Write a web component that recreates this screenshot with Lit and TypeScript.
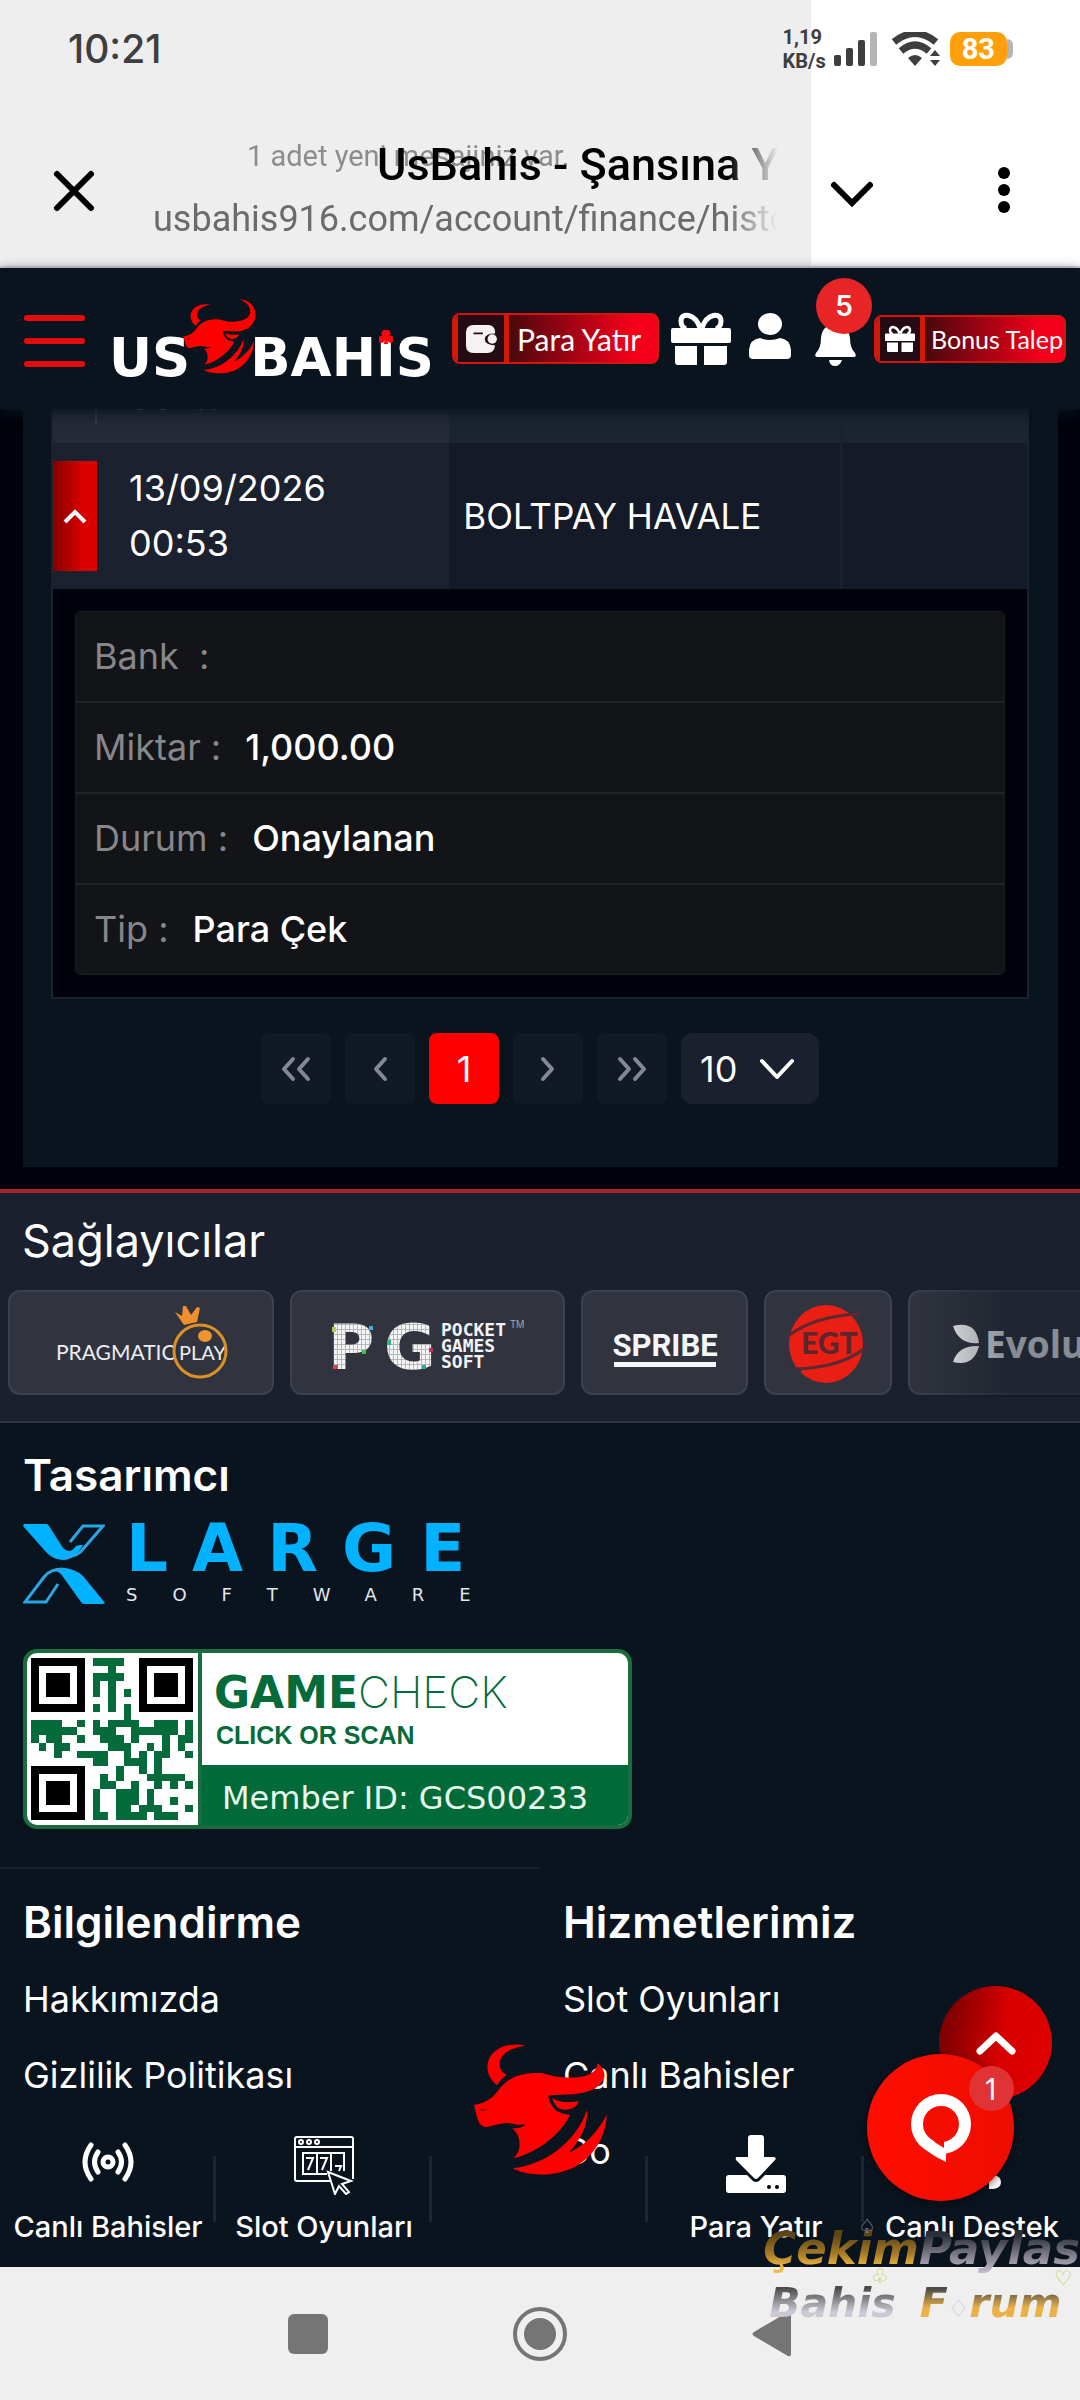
import { LitElement, html, css, svg, nothing } from "lit";
import { customElement, property } from "lit/decorators.js";

const DETAILS: [string, string][] = [
  ["Bank  :", ""],
  ["Miktar :", "1,000.00"],
  ["Durum :", "Onaylanan"],
  ["Tip :", "Para Çek"],
];

/* Each entry is [row, first column, last column] of dark modules. */
const QR_RUNS: number[][] = [
  [0, 8, 11], [1, 10, 10], [2, 8, 11], [3, 8, 8], [3, 10, 10],
  [4, 8, 8], [4, 10, 10], [4, 12, 12], [5, 10, 10], [6, 8, 8], [6, 10, 10], [6, 12, 12], [7, 12, 12],
  [8, 0, 3], [8, 6, 6], [8, 8, 8], [8, 10, 13], [8, 16, 18], [8, 20, 20],
  [9, 0, 5], [9, 8, 10], [9, 13, 18], [9, 20, 20],
  [10, 0, 0], [10, 2, 3], [10, 6, 6], [10, 9, 11], [10, 13, 13], [10, 17, 17], [10, 19, 20],
  [11, 1, 1], [11, 3, 4], [11, 10, 12], [11, 15, 15], [11, 17, 17], [11, 19, 19],
  [12, 3, 3], [12, 6, 9], [12, 12, 12], [12, 14, 14], [12, 16, 17], [12, 20, 20],
  [13, 8, 9], [13, 12, 14], [13, 16, 16],
  [14, 11, 11], [14, 14, 14], [14, 16, 16],
  [15, 9, 9], [15, 11, 11], [15, 15, 19],
  [16, 9, 10], [16, 13, 13], [16, 16, 16], [16, 18, 18], [16, 20, 20],
  [17, 8, 8], [17, 11, 13], [17, 15, 15],
  [18, 8, 8], [18, 11, 13], [18, 15, 15], [18, 18, 18],
  [19, 8, 8], [19, 11, 12], [19, 14, 16], [19, 20, 20],
  [20, 8, 9], [20, 11, 14], [20, 16, 18],
];

const finder = (x: number, y: number) => svg`
  <rect x=${x} y=${y} width="7" height="7" fill="#000"/>
  <rect x=${x + 1} y=${y + 1} width="5" height="5" fill="#fff"/>
  <rect x=${x + 2} y=${y + 2} width="3" height="3" fill="#000"/>`;

const giftIcon = (cls: string) => html`<svg class=${cls} viewBox="0 0 60 52" aria-hidden="true">
  <path d="M29 15C24 0 10-1 10 8q0 6 5 8M31 15C36 0 50-1 50 8q0 6-5 8" fill="none" stroke="#fff" stroke-width="5"/>
  <path d="M2 15h56q2 0 2 2v11q0 2-2 2H2q-2 0-2-2V17q0-2 2-2z" fill="#fff"/>
  <path d="M4 33h22v19H7q-3 0-3-3zM33 33h23v16q0 3-3 3H33z" fill="#fff"/>
</svg>`;

@customElement("bull-mark")
class BullMark extends LitElement {
  @property({ type: Boolean }) cropped = false;
  static styles = css`
    :host { display: block; }
    .mark { display: block; width: 100%; height: 100%; overflow: visible; }
  `;
  render() {
    const horn = this.cropped
      ? "C350 148 385 142 400 128C408 120 412 112 412 102C426 114 438 130 432 148C420 180 380 192 340 196"
      : "C362 148 412 132 419 95C424 58 392 28 353 17C412 18 452 62 449 110C445 165 400 200 340 200";
    return html`<svg class="mark" viewBox="0 0 480 480" aria-hidden="true">
      <g fill="#fe0000">
        <path d="M196 50C150 38 100 55 85 95C75 130 95 158 112 168C118 155 130 145 140 138C116 125 112 100 128 80C143 62 170 54 196 50Z"/>
        <path d="M42 228C80 222 100 205 118 180C150 140 190 130 245 132C270 138 280 143 312 145${horn}L284 198L265 200C268 235 295 256 330 257C310 300 270 338 222 364C200 376 180 384 160 388C182 368 180 345 177 330C173 314 165 305 156 297C175 299 188 296 196 286C172 290 160 284 145 282C120 282 100 290 80 294C66 296 56 282 51 264Z"/>
        <path d="M277 206C292 220 330 222 356 216C350 240 320 246 302 240C288 234 280 220 277 206Z"/>
        <path d="M158 418C250 408 345 345 381 243C385 290 360 335 326 372C380 348 420 300 440 256C440 320 400 385 345 413C285 445 200 442 158 418Z"/>
      </g>
      <path d="M60 240q8-2 20 0q-5 7-14 7z" fill="#6d0308"/>
    </svg>`;
  }
}

@customElement("qr-code")
class QrCode extends LitElement {
  static styles = css`
    :host { display: block; }
    .code { display: block; width: 100%; height: 100%; }
  `;
  render() {
    return html`<svg class="code" viewBox="0 0 21 21" shape-rendering="crispEdges" role="img" aria-label="QR">
      ${QR_RUNS.map(([r, a, b]) => svg`<rect x=${a} y=${r} width=${b - a + 1} height="1" fill="#056b3a"/>`)}
      ${finder(0, 0)}${finder(14, 0)}${finder(0, 14)}
    </svg>`;
  }
}

@customElement("phone-chrome")
class PhoneChrome extends LitElement {
  static styles = css`
    :host {
      display: block; color: #3e3e3e; border-bottom: 2px solid #d9dae0;
      background: linear-gradient(90deg, #eee 75.1%, #fff 75.1%);
      font-family: Roboto, sans-serif;
    }
    .status { display: flex; align-items: center; padding: 20px 71px 0 68px; height: 78px; box-sizing: border-box; gap: 14px; }
    .clock { font: 500 39px/48px Inter, sans-serif; margin-right: auto; }
    .speed { font-size: 20px; line-height: 24px; font-weight: 700; }
    .signal { width: 44px; height: 34px; margin-left: -6px; }
    .wifi { width: 48px; height: 34px; }
    .battery { display: flex; align-items: center; margin: 0 -4px; }
    .level { background: #ff9f0c; color: #fff; border-radius: 10px; padding: 0 12px; font-size: 29px; font-weight: 700; line-height: 34px; }
    .tip { width: 6px; height: 20px; background: #b5b5b5; border-radius: 0 8px 8px 0; }
    .bar { display: flex; align-items: center; padding: 60px 46px 20px 44px; }
    .tool { border: 0; padding: 0; background: none; width: 60px; height: 60px; display: grid; place-items: center; flex: none; }
    .tool svg { width: 60px; height: 60px; }
    .menu { margin-left: 92px; }
    .text { flex: 1; margin: 0 44px 0 49px; min-width: 0; mask-image: linear-gradient(90deg, #000 92%, transparent 100%); }
    .lines { display: grid; }
    .notice, .title { grid-area: 1 / 1; white-space: nowrap; }
    .notice { color: #8d8d8d; font-size: 29px; line-height: 36px; padding-left: 94px; }
    .title { color: #000; font-size: 45px; line-height: 54px; font-weight: 500; padding-left: 224px; overflow: hidden; }
    .url { color: #6b6b6b; font-size: 36px; line-height: 54px; font-weight: 400; white-space: nowrap; overflow: hidden; }
  `;
  render() {
    return html`
      <div class="status">
        <span class="clock">10:21</span>
        <span class="speed">1,19<br>KB/s</span>
        <svg class="signal" viewBox="0 0 44 34" aria-hidden="true">
          <g fill="#3e3e3e"><rect y="23" width="7" height="11" rx="2"/><rect x="12" y="16" width="7" height="18" rx="2"/><rect x="24" y="8" width="7" height="26" rx="2"/></g>
          <rect x="36" width="7" height="34" rx="2" fill="#b5b5b5"/>
        </svg>
        <svg class="wifi" viewBox="0 0 48 34" aria-hidden="true">
          <path d="M2 10Q23-7 44 10M9 19Q23 7 37 19" fill="none" stroke="#3e3e3e" stroke-width="7"/>
          <path d="M16 26q7-6 14 0l-7 8z" fill="#3e3e3e"/>
          <path d="M38 24l5-6 5 6zM38 28h10l-5 6z" fill="#3e3e3e"/>
        </svg>
        <span class="battery"><span class="level">83</span><span class="tip"></span></span>
      </div>
      <div class="bar">
        <button class="tool" aria-label="Kapat"><svg viewBox="0 0 60 60"><path d="M13 12l34 34M47 12L13 46" stroke="#000" stroke-width="6" stroke-linecap="round"/></svg></button>
        <div class="text">
          <div class="lines"><span class="notice">1 adet yeni mesajiniz var.</span><span class="title">UsBahis - Şansına Y</span></div>
          <div class="url">usbahis916.com/account/finance/histo</div>
        </div>
        <button class="tool" aria-label="Aç"><svg viewBox="0 0 60 60"><path d="M12 23l18 18 18-18" fill="none" stroke="#000" stroke-width="6" stroke-linecap="round"/></svg></button>
        <button class="tool menu" aria-label="Menü"><svg viewBox="0 0 60 60"><circle cx="30" cy="11" r="6"/><circle cx="30" cy="28" r="6"/><circle cx="30" cy="45" r="6"/></svg></button>
      </div>`;
  }
}

@customElement("site-header")
class SiteHeader extends LitElement {
  static styles = css`
    :host {
      display: flex; align-items: center; position: relative; z-index: 2; height: 141px; padding: 0 14px 0 24px; box-sizing: border-box;
      background: #0a141f; box-shadow: 0 4px 12px #0a141f; font-family: Inter, sans-serif;
    }
    button { border: 0; background: none; padding: 0; font: inherit; color: #fff; }
    .burger { display: flex; flex-direction: column; gap: 17px; width: 61px; flex: none; margin-top: 4px; }
    .burger i { height: 6px; border-radius: 3px; background: #e30d0f; }
    .logo { display: flex; align-items: flex-end; margin-left: 24px; color: #fff; text-decoration: none; font: 700 53px/48px "DejaVu Sans", sans-serif; }
    .bull { width: 85px; height: 85px; margin: 0 -11px 0 -14px; z-index: 1; }
    .dotted { position: relative; }
    .club { position: absolute; left: 50%; bottom: 44px; width: 14px; height: 14px; transform: translateX(-50%); }
    .word { margin-bottom: -1px; }
    .actions { display: flex; align-items: center; gap: 12px; margin-left: auto; }
    .icon { padding: 0 6px; position: relative; display: block; }
    .gift { width: 60px; height: 52px; display: block; overflow: visible; }
    .user { width: 42px; height: 46px; display: block; margin-bottom: 6px; }
    .bell { width: 41px; height: 42px; display: block; margin-top: 12px; }
    .plain { padding: 0; }
    .count { position: absolute; left: 7px; top: -34px; width: 56px; height: 56px; line-height: 56px; border-radius: 50%; background: #e82526; font-size: 28px; font-weight: 600; text-align: center; }
    .cta {
      display: flex; align-items: center; box-sizing: border-box; height: 51px; border: 2px solid #d81410; border-radius: 8px; white-space: nowrap;
      background: linear-gradient(90deg, #4d080d 28%, #f5001a 88%); font-family: Lato, sans-serif; font-size: 25px; overflow: hidden;
    }
    .box { width: 46px; align-self: stretch; border: 0 solid #d11a06; border-width: 0 5px 0 4px; border-radius: 4px 0 0 4px; display: grid; place-items: center; background: #250c14; flex: none; }
    .pay { width: 207px; gap: 8px; font-size: 30px; }
    .bonus { width: 192px; gap: 6px; height: 48px; }
    .bonus .box { width: 40px; }
    .mini { width: 30px; height: 32px; display: block; overflow: visible; }
  `;
  render() {
    return html`
      <button class="burger" aria-label="Menü"><i></i><i></i><i></i></button>
      <a class="logo" href="#"><span class="word">US</span><bull-mark class="bull"></bull-mark><span class="word">BAH<span class="dotted">I<svg class="club" viewBox="0 0 12 12"><path d="M6 0a3 3 0 0 1 3 5A3 3 0 1 1 7 9l1 3H4l1-3A3 3 0 1 1 3 5A3 3 0 0 1 6 0" fill="#f30a0e"/></svg></span>S</span></a>
      <div class="actions">
        <button class="cta pay"><span class="box"><svg class="mini" viewBox="0 0 32 30"><path d="M8 0h16q6 0 7 7v2q-11 0-11 6t11 7q-1 8-8 8H8q-8 0-8-8V8q0-8 8-8z" fill="#f6f2f2"/><path d="M8 9h10" stroke="#250c14" stroke-width="2"/><circle cx="28" cy="15" r="5" fill="#f6f2f2"/></svg></span>Para Yatır</button>
        <button class="icon plain" aria-label="Hediye">${giftIcon("gift")}</button>
        <button class="icon" aria-label="Hesap"><svg class="user" viewBox="0 0 42 46"><ellipse cx="21" cy="11" rx="12" ry="11" fill="#fff"/><path d="M11 25q10 4 20 0q10 1 11 12v5q0 4-4 4H4q-4 0-4-4v-5q1-11 11-12z" fill="#fff"/></svg></button>
        <button class="icon" aria-label="Bildirimler"><svg class="bell" viewBox="0 0 41 42"><path d="M20 0q13 1 15 14q0 10 5 15q2 4-1 4H2q-3 0-1-4q5-5 5-15Q7 1 20 0zM14 36h13q-2 6-7 6t-6-6z" fill="#fff"/></svg><span class="count">5</span></button>
        <button class="cta bonus"><span class="box">${giftIcon("mini")}</span>Bonus Talep</button>
      </div>`;
  }
}

@customElement("history-panel")
class HistoryPanel extends LitElement {
  static styles = css`
    :host { display: block; margin-top: -114px; background: #00030b; padding: 0 22px 22px 23px; font-family: Inter, sans-serif; color: #fff; font-size: 36px; }
    .panel { background: #0a141f; padding: 0 29px 63px 28px; }
    table { width: 100%; border-collapse: collapse; table-layout: fixed; border: 2px solid #1b222d; }
    td { padding: 0; height: 146px; background: #141a27; vertical-align: middle; }
    td + td { padding-left: 14px; }
    td:last-child { border-left: 2px solid #1b222e; }
    .date { width: 40.6%; background: #1b212e; line-height: 55px; }
    .method { width: 38.6%; font-size: 35px; }
    .old td { background: #1d2431; }
    .old .date { background: #242a36; color: #7e838b; }
    .flex { display: flex; align-items: center; gap: 32px; }
    .toggle { width: 44px; height: 110px; border: 0; padding: 0; background: linear-gradient(90deg, #870000, #db0000 70%); display: grid; place-items: center; flex: none; }
    .old .toggle { background: none; border-right: 2px solid #373d48; }
    .arrow { width: 26px; height: 18px; }
    .detail td { height: auto; background: #00030b; padding: 22px; border: 0; }
    dl { margin: 0; border-radius: 6px; background: #131417; border: 1px solid #1b1c20; }
    .item { display: flex; gap: 24px; padding: 0 18px; line-height: 89px; border-top: 2px solid #222427; }
    .item:first-child { border-top: 0; }
    dt { color: #86878a; white-space: pre; }
    dd { margin: 0; font-weight: 500; }
    .pager { display: flex; justify-content: center; gap: 14px; margin-top: 34px; }
    .page { width: 70px; height: 71px; border: 0; border-radius: 8px; background: #111926; color: #fff; font: inherit; display: grid; place-items: center; padding: 0; }
    .current { background: #fe0000; }
    .chev { width: 34px; height: 30px; }
    .size { position: relative; display: flex; align-items: center; }
    select { appearance: none; width: 138px; height: 71px; border: 0; border-radius: 12px; background: #1a202d; color: #fff; font: inherit; padding: 0 19px; }
    .drop { position: absolute; right: 24px; width: 36px; height: 22px; pointer-events: none; }
  `;
  private chev(d: string) {
    return html`<svg class="chev" viewBox="0 0 34 30"><path d=${d} fill="none" stroke="#838892" stroke-width="4" stroke-linecap="round" stroke-linejoin="round"/></svg>`;
  }
  render() {
    return html`<div class="panel">
      <table>
        <tr class="old">
          <td class="date"><div class="flex"><button class="toggle" aria-label="Aç"></button><span><br>00:47</span></div></td>
          <td class="method"></td><td></td>
        </tr>
        <tr>
          <td class="date"><div class="flex"><button class="toggle" aria-label="Kapat"><svg class="arrow" viewBox="0 0 26 18"><path d="M3 15L13 5l10 10" fill="none" stroke="#fff" stroke-width="4"/></svg></button><span>13/09/2026<br>00:53</span></div></td>
          <td class="method">BOLTPAY HAVALE</td><td></td>
        </tr>
        <tr class="detail"><td colspan="3"><dl>
          ${DETAILS.map(([k, v]) => html`<div class="item"><dt>${k}</dt>${v ? html`<dd>${v}</dd>` : nothing}</div>`)}
        </dl></td></tr>
      </table>
      <div class="pager">
        <button class="page" aria-label="İlk">${this.chev("M14 5L5 15l9 10M29 5L20 15l9 10")}</button>
        <button class="page" aria-label="Önceki">${this.chev("M22 5L13 15l9 10")}</button>
        <button class="page current">1</button>
        <button class="page" aria-label="Sonraki">${this.chev("M12 5l9 10-9 10")}</button>
        <button class="page" aria-label="Son">${this.chev("M5 5l9 10-9 10M20 5l9 10-9 10")}</button>
        <label class="size"><select aria-label="Satır"><option>10</option></select><svg class="drop" viewBox="0 0 36 22"><path d="M3 3l15 16L33 3" fill="none" stroke="#fff" stroke-width="4" stroke-linecap="round" stroke-linejoin="round"/></svg></label>
      </div>
    </div>`;
  }
}

@customElement("provider-strip")
class ProviderStrip extends LitElement {
  static styles = css`
    :host { display: block; background: #1a202d; border-top: 4px solid #a5242e; border-bottom: 2px solid #2f3742; color: #fff; font-family: Inter, sans-serif; overflow: hidden; padding-bottom: 26px; position: relative; }
    h2 { margin: 0; padding: 18px 22px 19px; font-size: 45px; line-height: 60px; font-weight: 400; }
    .row { display: flex; gap: 16px; padding-left: 8px; }
    .card { box-sizing: border-box; flex: none; height: 105px; border: 2px solid #3b424d; border-radius: 12px; background: #31343f; overflow: hidden; }
    .card svg { display: block; height: 101px; }
    .fade { position: absolute; right: 0; top: 96px; bottom: 24px; width: 16%; background: linear-gradient(90deg, transparent, #0c162177 60%); }
  `;
  render() {
    return html`<h2>Sağlayıcılar</h2>
      <div class="row">
        <a class="card" href="#"><svg width="262" viewBox="2 2 262 101">
          <text x="48" y="70" font-family="Lato" font-size="21" fill="#eceef2">PRAGMATIC</text>
          <text x="171" y="70" font-family="Lato" font-size="20" fill="#eceef2">PLAY</text>
          <circle cx="192" cy="61" r="26" fill="none" stroke="#dd9026" stroke-width="3"/>
          <ellipse cx="197" cy="46" rx="7" ry="6" fill="#ee962e"/>
          <path d="M167 22l7 4 1-10h3l5 9 6-8 3 1-3 14-13 3z" fill="#ee9030"/>
        </svg></a>
        <a class="card" href="#"><svg width="271" viewBox="2 2 271 101">
          <defs><pattern id="px" width="4" height="5" patternUnits="userSpaceOnUse"><rect width="4" height="5" fill="#b5b8bb"/><rect width="3" height="4" fill="#f4f5f4"/></pattern></defs>
          <text x="38 94" y="79" font-family="DejaVu Sans" font-weight="700" font-size="63" fill="url(#px)">PG</text>
          <path d="M42 37h4v5h-4z" fill="#b5c95a"/><path d="M79 36h4v4h-4z" fill="#3eafe0"/><path d="M43 75h5v4h-5z" fill="#d24a4a"/><path d="M72 60h4v4h-4z" fill="#38c440"/><path d="M97 50h4v5h-4z" fill="#27b98c"/><path d="M139 58h4v4h-4z" fill="#cc2c65"/><path d="M132 75h4v4h-4z" fill="#2ba6a5"/>
          <g font-family="DejaVu Sans Mono" font-weight="700" font-size="18" fill="#f2f3f4"><text x="151" y="46">POCKET</text><text x="151" y="62">GAMES</text><text x="151" y="78">SOFT</text></g>
          <text x="220" y="38" font-family="Liberation Sans" font-size="10" fill="#a3a6ac">TM</text>
        </svg></a>
        <a class="card" href="#"><svg width="163" viewBox="2 2 163 101">
          <text x="84" y="66" text-anchor="middle" font-family="Roboto" font-weight="700" font-size="31" fill="#f5f6f8">SPRIBE</text>
          <rect x="33" y="72" width="102" height="5" fill="#f5f6f8"/>
        </svg></a>
        <a class="card" href="#"><svg width="124" viewBox="2 2 124 101">
          <ellipse cx="62" cy="54" rx="37" ry="39" fill="#ea1f14"/>
          <path d="M24 46Q50 26 96 24" fill="none" stroke="#5a2a30" stroke-width="3"/>
          <path d="M30 79Q76 78 101 58" fill="none" stroke="#5a2a30" stroke-width="3"/>
          <path d="M24 73Q30 80 38 80L34 86z" fill="#31343f"/>
          <text x="37" y="64" font-family="Lato" font-weight="900" font-size="30" fill="#5b262c">EGT</text>
        </svg></a>
        <a class="card" href="#"><svg width="260" viewBox="2 2 260 101">
          <path d="M45 36q23-6 26 17-20 2-26-17zM45 72q5-17 26-16-5 21-26 16z" fill="#fff"/>
          <text x="77" y="68" font-family="Open Sans" font-weight="700" font-size="37" fill="#f4f5f9">Evolu</text>
        </svg></a>
      </div>
      <div class="fade"></div>`;
  }
}

@customElement("site-footer")
class SiteFooter extends LitElement {
  static styles = css`
    :host { display: block; color: #fff; font-family: Inter, sans-serif; }
    h3 { margin: 0; font-size: 44px; line-height: 60px; font-weight: 600; }
    .maker { padding: 22px 23px 38px; }
    .xlarge { display: flex; gap: 21px; margin-top: 19px; }
    .x { width: 82px; height: 80px; }
    .big { color: #00b2ff; font: 700 66px/50px "DejaVu Sans", sans-serif; letter-spacing: 24px; }
    .small { color: #e4e6ea; font: 400 18px/18px "DejaVu Sans", sans-serif; letter-spacing: 35px; margin-top: 12px; }
    .check { display: grid; grid-template-columns: 171px 1fr; width: 609px; height: 180px; box-sizing: border-box; border: 4px solid #1b6b40; border-radius: 14px; overflow: hidden; background: #fff; margin-top: 45px; color: #056b3a; text-decoration: none; }
    .qr { width: 162px; height: 162px; margin: 5px 4px; }
    .side { border-left: 4px solid #1b6b40; display: flex; flex-direction: column; }
    .brand { font: 200 44px/44px Inter, sans-serif; padding: 17px 12px 0; }
    .brand b { font-family: "DejaVu Sans", sans-serif; font-weight: 700; }
    .scan { font: 700 25px/34px "Liberation Sans", sans-serif; padding: 0 14px; margin-top: 3px; }
    .member { margin-top: auto; background: #006b38; color: #e9f7ef; font: 400 32px/54px "DejaVu Sans", sans-serif; padding: 6px 20px 0; }
    .cols { display: grid; grid-template-columns: 1fr 1fr; }
    .col { padding: 23px 23px 0; display: flex; flex-direction: column; }
    .col:first-child { border-top: 2px solid #17212c; }
    .col:last-child { padding-top: 25px; }
    .col a { color: #fff; text-decoration: none; font-size: 36px; line-height: 52px; margin-top: 24px; }
    .col h3 { margin-bottom: -3px; }
    .cut { width: 44px; }
  `;
  render() {
    return html`
      <div class="maker">
        <h3>Tasarımcı</h3>
        <div class="xlarge">
          <svg class="x" viewBox="0 0 82 80" aria-hidden="true">
            <path d="M1 0h22q2 0 3 2l14 22q7 7 13-2l4-1L60 21Q52 36 40 36 29 35 23 28L0 2z" fill="#00b2ff"/>
            <path d="M47 18L60 2h20L61 24Q55 33 42 33" fill="none" stroke="#2aa5e6" stroke-width="3"/>
            <path d="M80 80H61q-2 0-3-2L38 50q-7-6-12 0Q30 43 42 44q10 1 18 8l22 27z" fill="#00b2ff"/>
            <path d="M35 60L23 78H2L21 53Q27 45 40 45" fill="none" stroke="#2aa5e6" stroke-width="3"/>
          </svg>
          <div><div class="big">LARGE</div><div class="small">SOFTWARE</div></div>
        </div>
        <a class="check" href="#">
          <qr-code class="qr"></qr-code>
          <div class="side"><div class="brand"><b>GAME</b>CHECK</div><div class="scan">CLICK OR SCAN</div><div class="member">Member ID: GCS00233</div></div>
        </a>
      </div>
      <div class="cols">
        <nav class="col"><h3>Bilgilendirme</h3><a href="#">Hakkımızda</a><a href="#">Gizlilik Politikası</a></nav>
        <nav class="col"><h3>Hizmetlerimiz</h3><a href="#">Slot Oyunları</a><a href="#">Canlı Bahisler</a><a class="cut" href="#">Co</a></nav>
      </div>`;
  }
}

@customElement("tab-bar")
class TabBar extends LitElement {
  static styles = css`
    :host { display: grid; grid-template-columns: repeat(5, 1fr); position: relative; height: 138px; margin-top: -49px; font-family: Inter, sans-serif; }
    .tab { display: flex; flex-direction: column; align-items: center; justify-content: space-between; color: #fff; text-decoration: none; font-size: 29px; font-weight: 500; line-height: 36px; padding: 7px 0 21px; white-space: nowrap; position: relative; background: linear-gradient(#1d2630, #1d2630) right 28px / 3px 66px no-repeat; }
    .tab:last-child { background: none; }
    .ico { height: 60px; width: 62px; }
    .bull { position: absolute; left: 28px; top: -99px; width: 160px; height: 160px; }
  `;
  render() {
    return html`
      <a class="tab" href="#"><svg class="ico" viewBox="0 0 62 60"><g fill="none" stroke="#fff" stroke-width="5" stroke-linecap="round"><circle cx="31" cy="27" r="5"/><path d="M21 17q-7 10 0 20M41 17q7 10 0 20M14 10q-12 17 0 34M48 10q12 17 0 34"/></g></svg>Canlı Bahisler</a>
      <a class="tab" href="#"><svg class="ico" viewBox="0 0 62 60"><g fill="none" stroke="#fff" stroke-width="2"><path d="M38 46H4q-2 0-2-2V4q0-2 2-2h54q2 0 2 2v40M2 12h58"/><circle cx="8" cy="7" r="2"/><circle cx="16" cy="7" r="2"/><circle cx="24" cy="7" r="2"/><path d="M34 39H10V18h41v18M24 18v21M38 18v18M13 23h7l-5 12M27 23h7l-5 12M42 31h6l-2 5"/><path d="M35 37l23 9-9 3 7 8-3 2-7-8-4 8z" fill="#0a141f"/></g></svg>Slot Oyunları</a>
      <a class="tab" href="#" aria-label="UsBahis"><bull-mark class="bull" cropped></bull-mark></a>
      <a class="tab" href="#"><svg class="ico" viewBox="0 0 62 60"><path d="M26 0h10q3 0 3 3v19h10q3 1 1 3L33 43q-2 2-4 0L11 25q-1-3 1-3h11V3q0-3 3-3z" fill="#fff"/><path d="M4 40h18l6 6q3 2 6 0l6-6h18q3 0 3 3v12q0 3-3 3H4q-3 0-3-3V43q0-3 3-3z" fill="#fff"/><circle cx="44" cy="52" r="2"/><circle cx="52" cy="52" r="2"/></svg>Para Yatır</a>
      <a class="tab" href="#"><svg class="ico" viewBox="0 0 62 60"><path d="M48 40h4q8 1 8 7t-8 7h-4z" fill="#fff"/></svg>Canlı Destek</a>`;
  }
}

@customElement("app-root")
class AppRoot extends LitElement {
  static styles = css`
    :host { display: flex; flex-direction: column; position: relative; min-height: 100vh; background: #0a141f; overflow: hidden; }
    .system { margin-top: auto; min-height: 133px; background: #efefef; display: grid; grid-template-columns: 1fr auto 1fr; align-items: center; justify-items: center; box-sizing: border-box; padding: 0 104px; }
    .system button { border: 0; background: none; padding: 0; display: block; }
    .system svg { width: 56px; height: 56px; display: block; }
    .float { position: absolute; right: 28px; bottom: 301px; width: 113px; height: 113px; border: 0; border-radius: 50%; background: linear-gradient(100deg, #820000 12%, #d80000 55%, #e00000); display: grid; place-items: center; padding: 0; }
    .caret { width: 42px; height: 26px; }
    .chat { right: 66px; bottom: 199px; width: 147px; height: 147px; background: linear-gradient(90deg, #ff0d00, #ee0d00); box-shadow: 0 2px 8px #0008; }
    .bubble { width: 60px; height: 68px; }
    .num { position: absolute; right: 0; top: 12px; width: 45px; height: 45px; border-radius: 50%; background: #df3336; color: #fff; font: 400 30px/45px "Noto Sans", sans-serif; }
    .mark { position: absolute; right: 0; bottom: 64px; display: flex; flex-direction: column; font: italic 700 45px/54px "DejaVu Sans", sans-serif; pointer-events: none; }
    .mark span { background-clip: text; -webkit-background-clip: text; color: transparent; }
    .gold { background-image: linear-gradient(#5e4515 25%, #a67b27 60%, #f3b944 85%); }
    .steel { background-image: linear-gradient(#2b2f38 25%, #8f8c98 70%, #c9c4d2); }
    .silver { background-image: linear-gradient(#4b4b4b 20%, #cdc8d4 60%); }
    .amber { background-image: linear-gradient(#4a4a48 20%, #e9b147 60%); }
    .second { padding-left: 6px; display: flex; gap: 24px; font-size: 41px; }
    .suit { position: absolute; font: 400 20px/20px "DejaVu Sans", sans-serif; color: #c9cf3a; }
    .spade { left: 30%; top: -6px; color: #969aa4; }
    .clubs { left: 34%; top: 44px; }
    .heart { right: 8px; top: 46px; }
    .mark .gap { color: #d9c9d0; background: none; font-size: 24px; }
  `;
  render() {
    return html`
      <phone-chrome></phone-chrome>
      <site-header></site-header>
      <history-panel></history-panel>
      <provider-strip></provider-strip>
      <site-footer></site-footer>
      <tab-bar></tab-bar>
      <div class="system">
        <button aria-label="Son uygulamalar"><svg viewBox="0 0 56 56"><rect x="8" y="8" width="40" height="40" rx="6" fill="#757575"/></svg></button>
        <button aria-label="Ana ekran"><svg viewBox="0 0 56 56"><circle cx="28" cy="28" r="25" fill="none" stroke="#757575" stroke-width="4"/><circle cx="28" cy="28" r="16" fill="#757575"/></svg></button>
        <button aria-label="Geri"><svg viewBox="0 0 56 56"><path d="M10 26L44 6q3-1 3 2v40q0 3-3 2L10 30q-3-2 0-4z" fill="#757575"/></svg></button>
      </div>
      <button class="float" aria-label="Yukarı"><svg class="caret" viewBox="0 0 42 26"><path d="M5 21L21 6l16 15" fill="none" stroke="#fff" stroke-width="7" stroke-linecap="round" stroke-linejoin="round"/></svg></button>
      <button class="float chat" aria-label="Sohbet"><svg class="bubble" viewBox="0 0 60 68"><circle cx="30" cy="30" r="30" fill="#fff"/><path d="M10 52Q20 61 35 68V50z" fill="#fff"/><circle cx="30" cy="30" r="18" fill="#f50d00"/><path d="M18 43Q25 50 33 54V44z" fill="#f50d00"/></svg><span class="num">1</span></button>
      <div class="mark" aria-hidden="true">
        <div><span class="gold">Çekim</span><span class="steel">Paylas</span></div>
        <div class="second"><span class="silver">Bahis</span><div><span class="amber">F</span><span class="gap">♢</span><span class="amber">rum</span></div></div>
        <i class="suit spade">♤</i><i class="suit clubs">♧</i><i class="suit heart">♡</i>
      </div>`;
  }
}
